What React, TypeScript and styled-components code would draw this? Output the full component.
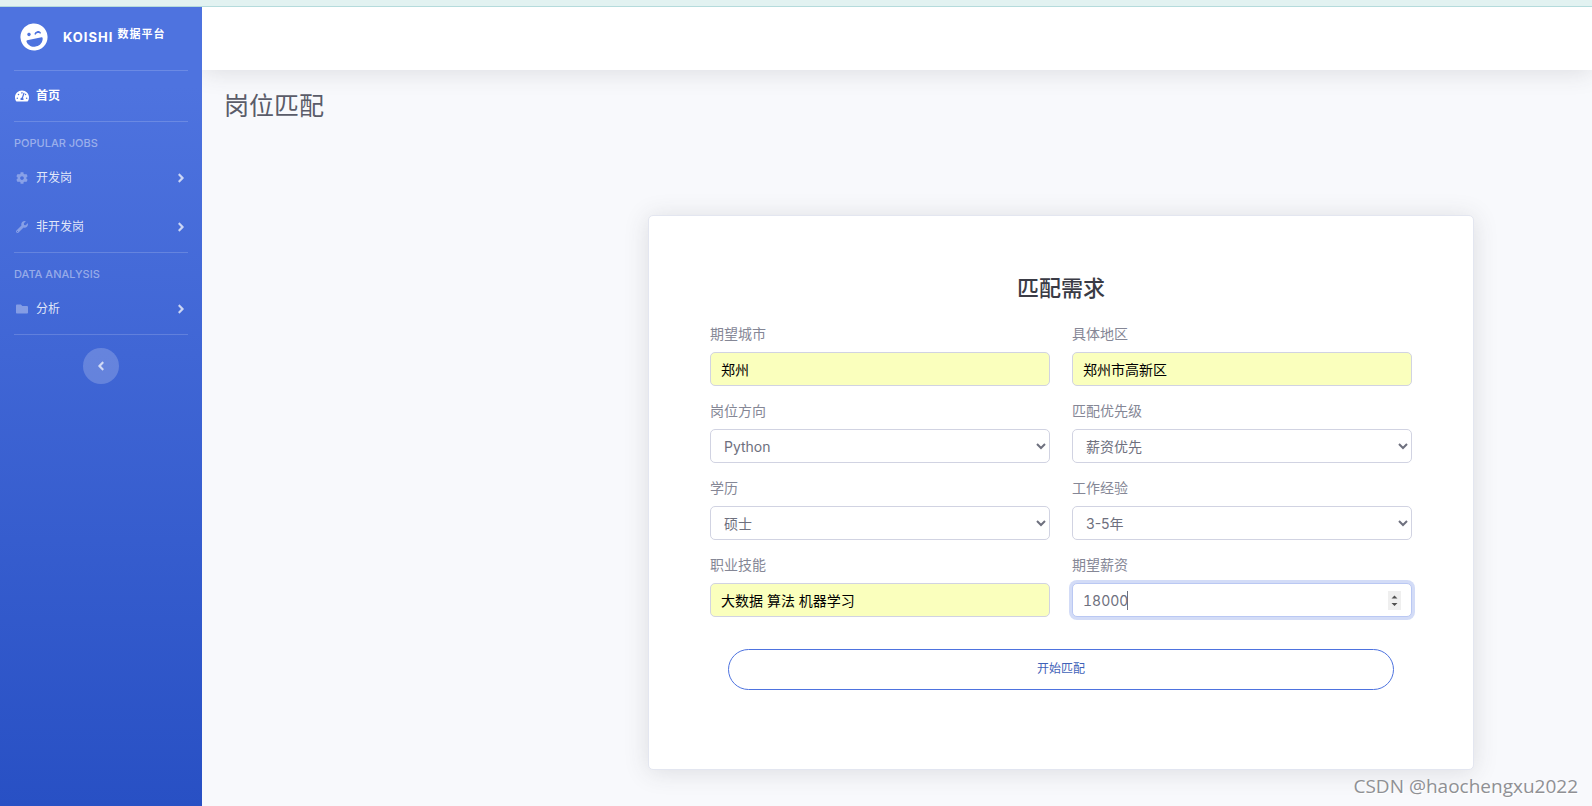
import React, { useEffect, useRef, useState } from "react";
import styled, { createGlobalStyle, css } from "styled-components";
import {
  FaAngleLeft,
  FaAngleRight,
  FaCog,
  FaFolder,
  FaLaughWink,
  FaTachometerAlt,
  FaWrench,
} from "react-icons/fa";

const GlobalStyle = createGlobalStyle`
  *, *::before, *::after { box-sizing: border-box; }
  body {
    margin: 0;
    background: #f8f9fc;
    color: #858796;
    font-family: Inter, "Noto Sans CJK SC", sans-serif;
    font-size: 14px;
    line-height: 22px;
  }
  button, input, select { font: inherit; }
`;

const Page = styled.div`
  position: relative;
  display: flex;
  flex-direction: column;
  min-height: 100vh;
`;

const TopStrip = styled.div`
  position: relative;
  z-index: 1;
  height: 7px;
  background: #e2f2f1;
  border-bottom: 1px solid #b5dbdc;
`;

const Shell = styled.div`
  display: flex;
  flex: 1;
`;

const Sidebar = styled.nav`
  position: relative;
  z-index: 1;
  flex: none;
  width: 202px;
  padding: 0 14px;
  background: linear-gradient(180deg, #4e73df 10%, #2850c4 100%);
  color: #fff;
`;

const Brand = styled.a`
  display: flex;
  align-items: center;
  gap: 15px;
  height: 63px;
  padding: 0 6px 3px;
  color: #fff;
  font-size: 13px;
  font-weight: 700;
  letter-spacing: 1px;
  text-decoration: none;
  svg { flex: none; }
`;

const BrandName = styled.span`
  white-space: nowrap;
  sup {
    font-size: 11px;
    line-height: 0;
    vertical-align: 4px;
  }
`;

const Divider = styled.hr`
  margin: 0;
  border: 0;
  border-top: 1px solid rgba(255, 255, 255, 0.17);
`;

const SectionHeading = styled.div`
  padding: 13px 0 3px;
  color: rgba(255, 255, 255, 0.45);
  font-size: 11px;
  line-height: 16px;
  font-weight: 500;
`;

const NavItem = styled.a<{ $active?: boolean }>`
  display: flex;
  align-items: center;
  gap: 7px;
  height: ${(p) => (p.$active ? 50 : 49)}px;
  padding-bottom: ${(p) => (p.$active ? 0 : 2)}px;
  color: ${(p) => (p.$active ? "#fff" : "rgba(255,255,255,0.85)")};
  font-size: 12px;
  font-weight: ${(p) => (p.$active ? 700 : 400)};
  text-decoration: none;
`;

const NavIcon = styled.span<{ $active?: boolean }>`
  display: flex;
  justify-content: center;
  width: 15px;
  color: ${(p) => (p.$active ? "#fff" : "rgba(255,255,255,0.35)")};
`;

const Chevron = styled(FaAngleRight)`
  margin-left: auto;
  opacity: 0.85;
`;

const SidebarToggle = styled.button`
  display: flex;
  align-items: center;
  justify-content: center;
  width: 36px;
  height: 36px;
  margin: 13px auto;
  padding: 0;
  border: 0;
  border-radius: 50%;
  background: rgba(255, 255, 255, 0.2);
  color: rgba(255, 255, 255, 0.7);
`;

const Content = styled.div`
  flex: 1;
  min-width: 0;
`;

const Topbar = styled.header`
  height: 63px;
  background: #fff;
  box-shadow: 0 2px 25px rgba(58, 59, 69, 0.15);
`;

const Main = styled.main`
  padding: 20px 22px 35px;
`;

const PageTitle = styled.h1`
  margin: 0 0 93px;
  color: #5a5c69;
  font-size: 25px;
  line-height: 32px;
  font-weight: 400;
`;

const CardGrid = styled.div`
  display: grid;
  grid-template-columns: 424fr 826fr 96fr;
`;

const Card = styled.form`
  grid-column: 2;
  padding: 59px 61px 79px;
  border: 1px solid #e3e6f0;
  border-radius: 5px;
  background: #fff;
  box-shadow: 0 2px 25px rgba(58, 59, 69, 0.15);
`;

const CardTitle = styled.h2`
  margin: 0 0 22px;
  color: #3a3b45;
  font-size: 22px;
  line-height: 26px;
  font-weight: 500;
  text-align: center;
`;

const Fields = styled.div`
  display: grid;
  grid-template-columns: 1fr 1fr;
  gap: 14px 22px;
`;

const Field = styled.div`
  display: flex;
  flex-direction: column;
  gap: 7px;
`;

const control = css`
  width: 100%;
  height: 34px;
  border: 1px solid #d1d3e2;
  border-radius: 5px;
  background: #fff;
  color: #6e707e;
  outline: 0;
`;

const spinnerArrows =
  "data:image/svg+xml,%3Csvg xmlns='http://www.w3.org/2000/svg' viewBox='0 0 13 19'%3E%3Cpath fill='%23505050' d='M3.5 7.5 6.5 4.5 9.5 7.5ZM3.5 12 6.5 15 9.5 12Z'/%3E%3C/svg%3E";

const Input = styled.input<{ $filled?: boolean }>`
  ${control}
  padding: 0 10px;
  ${(p) => p.$filled && css`
    background: #faffbd;
    color: #000;
  `}
  &:focus {
    border-color: #bac8f3;
    box-shadow: 0 0 0 3px rgba(78, 115, 223, 0.25);
  }
  &[type="number"] { caret-color: transparent; font-variant-numeric: tabular-nums; }
  &::-webkit-inner-spin-button {
    appearance: none;
    width: 13px;
    height: 19px;
    opacity: 1;
    background: #efefef url("${spinnerArrows}") center / 13px 19px no-repeat;
  }
`;

const NumberBox = styled.div`
  position: relative;
  display: flex;
`;

const Caret = styled.span`
  position: absolute;
  top: 8px;
  width: 1px;
  height: 19px;
  background: #6e707e;
  font-variant-numeric: tabular-nums;
  pointer-events: none;
`;

const Select = styled.select`
  ${control}
  padding: 0 0 0 9px;
`;

const SubmitButton = styled.button`
  display: block;
  width: calc(100% - 36px);
  height: 41px;
  margin: 32px auto 0;
  padding: 0 0 2px;
  border: 1px solid #4e73df;
  border-radius: 21px;
  background: #fff;
  color: #3f62b8;
  font-size: 12px;
`;

const Watermark = styled.div`
  position: absolute;
  right: 14px;
  bottom: 6px;
  color: #8f9094;
  font-family: "Open Sans", sans-serif;
  font-size: 19px;
  line-height: 28px;
  text-shadow: 1px 1px 0 #fff;
`;

type FieldDef = { id: string; label: string; value: string; kind: "text" | "select" | "number" };

const fields: FieldDef[] = [
  { id: "city", label: "期望城市", value: "郑州", kind: "text" },
  { id: "area", label: "具体地区", value: "郑州市高新区", kind: "text" },
  { id: "direction", label: "岗位方向", value: "Python", kind: "select" },
  { id: "priority", label: "匹配优先级", value: "薪资优先", kind: "select" },
  { id: "education", label: "学历", value: "硕士", kind: "select" },
  { id: "experience", label: "工作经验", value: "3-5年", kind: "select" },
  { id: "skills", label: "职业技能", value: "大数据 算法 机器学习", kind: "text" },
  { id: "salary", label: "期望薪资", value: "18000", kind: "number" },
];

function SalaryInput({ id, initial }: { id: string; initial: string }) {
  const ref = useRef<HTMLInputElement>(null);
  const [value, setValue] = useState(initial);
  useEffect(() => ref.current?.focus({ preventScroll: true }), []);
  return (
    <NumberBox>
      <Input ref={ref} id={id} type="number" value={value} onChange={(e) => setValue(e.target.value)} />
      <Caret style={{ left: `calc(11px + ${value.length}ch)` }} />
    </NumberBox>
  );
}

function FormField({ id, label, value, kind }: FieldDef) {
  return (
    <Field>
      <label htmlFor={id}>{label}</label>
      {kind === "text" && <Input id={id} type="text" defaultValue={value} $filled />}
      {kind === "select" && (
        <Select id={id} defaultValue={value}>
          <option>{value}</option>
        </Select>
      )}
      {kind === "number" && <SalaryInput id={id} initial={value} />}
    </Field>
  );
}

export default function App() {
  return (
    <Page>
      <GlobalStyle />
      <TopStrip />
      <Shell>
        <Sidebar>
          <Brand href="#">
            <FaLaughWink size={28} transform="rotate(-12)" />
            <BrandName>
              KOISHI <sup>数据平台</sup>
            </BrandName>
          </Brand>
          <Divider />
          <NavItem href="#" $active>
            <NavIcon $active><FaTachometerAlt size={14} /></NavIcon>
            首页
          </NavItem>
          <Divider />
          <SectionHeading>POPULAR JOBS</SectionHeading>
          <NavItem href="#">
            <NavIcon><FaCog size={12} /></NavIcon>
            开发岗
            <Chevron size={14} />
          </NavItem>
          <NavItem href="#">
            <NavIcon><FaWrench size={12} /></NavIcon>
            非开发岗
            <Chevron size={14} />
          </NavItem>
          <Divider />
          <SectionHeading>DATA ANALYSIS</SectionHeading>
          <NavItem href="#">
            <NavIcon><FaFolder size={12} /></NavIcon>
            分析
            <Chevron size={14} />
          </NavItem>
          <Divider />
          <SidebarToggle type="button" aria-label="收起侧栏">
            <FaAngleLeft size={14} />
          </SidebarToggle>
        </Sidebar>
        <Content>
          <Topbar />
          <Main>
            <PageTitle>岗位匹配</PageTitle>
            <CardGrid>
              <Card onSubmit={(e) => e.preventDefault()}>
                <CardTitle>匹配需求</CardTitle>
                <Fields>
                  {fields.map((f) => (
                    <FormField key={f.id} {...f} />
                  ))}
                </Fields>
                <SubmitButton type="submit">开始匹配</SubmitButton>
              </Card>
            </CardGrid>
          </Main>
        </Content>
      </Shell>
      <Watermark>CSDN @haochengxu2022</Watermark>
    </Page>
  );
}
